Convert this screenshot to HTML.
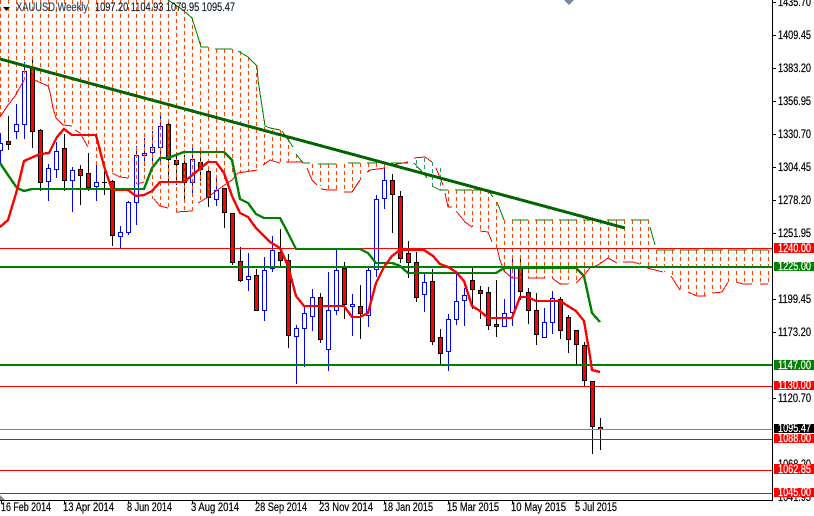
<!DOCTYPE html>
<html><head><meta charset="utf-8"><style>
html,body{margin:0;padding:0;background:#fff;width:814px;height:516px;overflow:hidden}
svg{display:block;font-family:"Liberation Sans",sans-serif;font-size:11.5px}
text{stroke:currentColor;stroke-width:.22px;shape-rendering:auto}
.k{color:#000}.w{color:#fff}
.c{fill:none;stroke:#ff4500;stroke-dasharray:4 3;stroke-width:1}
.tg{fill:none;stroke:#008000;stroke-width:1}
.tr{fill:none;stroke:#f00;stroke-width:1}
</style></head><body>
<svg width="814" height="516" viewBox="0 0 814 516" xmlns="http://www.w3.org/2000/svg" shape-rendering="crispEdges">
<rect width="814" height="516" fill="#fff"/>
<!-- wicks and bodies -->
<path fill="none" stroke="#00f" d="M.5 133V163M16.5 104V139M24.5 62V139M48.5 164V201M56.5 142V178M72.5 167V212M96.5 162V201M120.5 226V248M128.5 201V235M136.5 146V225M144.5 138V166M152.5 131V163M160.5 116V165M192.5 145V197M216.5 178V206M248.5 253V291M264.5 257V321M272.5 236V272M296.5 325V384M304.5 306V367M312.5 289V331M328.5 272V371M336.5 250V315M352.5 294V336M368.5 267V327M376.5 195V277M384.5 165V209M424.5 274V312M448.5 314V371M456.5 274V325M464.5 288V326M504.5 299V326M512.5 256V326M544.5 308V338M552.5 291V334"/>
<path fill="#fff" stroke="#00f" d="M-1.5 143.500h4v7h-4zM14.500 124.500h4v7h-4zM22.500 71.500h4v53h-4zM46.500 168.500h4v13h-4zM54.500 151.500h4v18h-4zM70.500 170.500h4v10h-4zM94.500 182.500h4v4h-4zM118.500 232.500h4v4h-4zM126.500 202.500h4v30h-4zM134.500 155.500h4v47h-4zM142.500 153.500h4v2h-4zM150.500 147.500h4v5h-4zM158.500 126.500h4v21h-4zM190.500 159.500h4v23h-4zM214.500 190.500h4v9h-4zM246.500 276.500h4v3h-4zM262.500 270.500h4v40h-4zM270.500 250.500h4v18h-4zM294.500 328.500h4v8h-4zM302.500 313.500h4v15h-4zM310.500 297.500h4v19h-4zM326.500 310.500h4v39h-4zM334.500 270.500h4v40h-4zM350.500 304.500h4v2h-4zM366.500 270.500h4v45h-4zM374.500 199.500h4v70h-4zM382.500 180.500h4v18h-4zM422.500 282.500h4v12h-4zM446.500 319.500h4v32h-4zM454.500 301.500h4v18h-4zM462.500 295.500h4v5h-4zM502.500 313.500h4v13h-4zM510.500 268.500h4v44h-4zM542.500 322.500h4v15h-4zM550.500 298.500h4v24h-4z"/>
<path fill="none" stroke="#000" d="M8.500 116V150M32.500 58V148M40.500 129V191M64.500 134V191M80.500 165V205M88.500 153V191M104.500 170V195M112.500 180V246M168.500 123V183M176.500 155V185M184.500 155V200M200.500 150V181M208.500 170V207M224.500 188V228M232.500 213V265M240.500 247V282M256.500 269V311M280.500 229V266M288.500 254V348M320.500 293V343M344.500 262V319M360.500 285V339M392.500 174V233M400.500 191V263M408.500 241V278M416.500 252V302M432.500 269V345M440.500 329V364M472.500 268V309M480.500 286V319M488.500 287V330M496.500 280V337M520.500 255V300M528.500 288V324M536.500 293V345M560.500 297V339M568.500 315V353M576.500 330V364M584.500 342V386M592.500 381V454M600.500 418V450M102 182.500h5"/>
<path fill="#f00" stroke="#000" d="M6.500 141.500h4v3h-4zM30.500 68.500h4v63h-4zM38.500 130.500h4v52h-4zM62.500 148.500h4v32h-4zM78.500 169.500h4v6h-4zM86.500 173.500h4v14h-4zM110.500 181.500h4v54h-4zM166.500 124.500h4v35h-4zM174.500 160.500h4v4h-4zM182.500 163.500h4v19h-4zM198.500 162.500h4v7h-4zM206.500 171.500h4v26h-4zM222.500 188.500h4v24h-4zM230.500 213.500h4v49h-4zM238.500 261.500h4v19h-4zM254.500 275.500h4v35h-4zM278.500 252.500h4v8h-4zM286.500 260.500h4v75h-4zM318.500 297.500h4v42h-4zM342.500 268.500h4v36h-4zM358.500 306.500h4v7h-4zM390.500 180.500h4v14h-4zM398.500 196.500h4v62h-4zM406.500 253.500h4v9h-4zM414.500 262.500h4v35h-4zM430.500 281.500h4v60h-4zM438.500 337.500h4v16h-4zM470.500 280.500h4v9h-4zM478.500 290.500h4v3h-4zM486.500 292.500h4v33h-4zM494.500 324.500h4v2h-4zM518.500 268.500h4v23h-4zM526.500 292.500h4v18h-4zM534.500 310.500h4v24h-4zM558.500 299.500h4v31h-4zM566.500 317.500h4v22h-4zM574.500 330.500h4v14h-4zM582.500 345.500h4v35h-4zM590.500 381.500h4v45h-4zM598.500 427.500h4v2h-4z"/>
<!-- cloud columns -->
<path class="c" d="M.5 0V117M8.500 0V105M16.500 0V98M24.500 0V80M32.500 0V78M40.500 0V82M48.500 0V86M56.500 0V116M64.500 0V125M72.500 0V126M80.500 0V132M88.500 0V147M96.500 0V168M104.500 0V172M112.500 0V173M120.500 0V177M128.500 0V178M136.500 0V184M144.500 0V182M152.500 0V199M160.500 0V206M168.500 0V208M176.500 5V212M184.500 10V212M192.500 18V211M200.500 42V203M208.500 47V197M216.500 49V191M224.500 49V182M232.500 49V175M240.500 51V172M248.500 57V171M256.500 66V170M264.500 120V165M272.500 130V160M280.500 130V163M288.500 138V162M296.500 154V162M312.500 164V175M320.500 164V186M328.500 164V189M336.500 164V190M344.500 164V192M352.500 163V192M360.500 163V180M368.500 163V172M376.500 163V170M384.500 164V168M448.500 190V207M456.500 190V212M464.500 190V218M472.500 190V227M480.500 190V231M488.500 190V232M496.500 202V248M504.500 220V271M512.500 220V278M520.500 220V278M528.500 220V278M536.500 220V278M544.500 220V278M552.500 220V278M560.500 220V284M568.500 220V284M576.500 220V283M584.500 220V274M592.500 220V268M600.500 220V263M608.500 220V258M616.500 220V262M624.500 220V262M632.500 220V262M640.500 220V264M648.500 220V267M656.500 250V270M664.500 250V272M672.500 250V276M680.500 250V290M688.500 250V292M696.500 250V295M704.500 250V296M712.500 250V293M720.500 250V292M728.500 250V282M736.500 250V282M744.500 250V284M752.500 250V284M760.500 250V284M768.500 250V284"/>
<path class="c" style="stroke:#1a9a6a" d="M416.500 160V168M424.500 158V173M432.500 162V186M440.500 168V190"/>
<!-- cloud edges -->
<path class="tg" d="M168 0L183 10L192 18L198 37L201 47H208M215 49H232M238 51L248 57L257 66L258 80L265 126L270 128L280 130M282 131L293 147M296 154L303 163H310M318 164H336M348 163H360M367 163H377M391 163H408M414 163L425 175L427 178M432 186L440 190H448M455 190H472M473 190H488L493 197M497 202L504 220M512 220H528M535 220H553M559 220H577M583 220H601M607 220H625M631 220H649M650 227L655 245M657 250H675M680 250H699M704 250H723M728 250H747M752 250H768"/>
<path class="tr" d="M0 117L8 105L15 96L24 80M30 78L48 86L50 92L53 108L56 118L63 125L72 126M75 130L80 133L88 147M112 173L120 177L128 178M137 184L144 182M154 199L160 206L168 208M176 212L192 211M198 203L208 197L216 191L232 180L238 173L257 170M263 165L270 160L280 163M286 162H303M307 168L312 180L317 185M321 189L328 190H337M344 192H352L360 180M367 172L370 170L385 168M392 165L408 162M414 158L425 157L432 162M436 168L443 185M445 193L448 207L452 207M457 212L465 222L472 227M480 231L488 232L492 242M497 248L500 260L504 271L512 278H520M528 278H545M552 278L560 284H568M576 283L585 274L590 268L598 265L608 258L617 263M623 262H633L640 264M647 268L663 272M671 276L680 290M688 292L697 296H706M713 293L722 292L728 282M736 282L743 284H752M760 284H768"/>
<!-- horizontal levels -->
<rect x="0" y="248" width="772" height="1" fill="#f00"/>
<rect x="0" y="266" width="772" height="2" fill="#008000"/>
<rect x="0" y="364" width="772" height="2" fill="#008000"/>
<rect x="0" y="386" width="772" height="1" fill="#f00"/>
<rect x="0" y="429" width="772" height="1" fill="#808890"/>
<rect x="0" y="439" width="772" height="1" fill="#f00"/>
<rect x="0" y="470" width="772" height="1" fill="#f00"/>
<rect x="0" y="493" width="772" height="1" fill="#f00"/>
<!-- trendline -->
<path d="M0 59L625 228" fill="none" stroke="#006400" stroke-width="3"/>
<!-- kijun / tenkan -->
<path fill="none" stroke="#008000" stroke-width="2.400" d="M0 163L8 175L17 188L24 191L32 189H144L152 168L160 158L168 158L184 152H224L232 160L240 199L248 203L256 214L264 218H280L288 233L296 249H360L368 253L376 263H392L400 266L408 273H496L504 268H576L584 276L592 313L600 322"/>
<path fill="none" stroke="#f00" stroke-width="2.400" d="M0 227L8 220L17 190L24 161L40 154L49 153L57 137L64 129L72 135H96L104 166L112 190H128L136 196L144 195L152 191L160 182H184L208 162H216L224 173L232 196L240 213L248 217L256 228L270 242L280 248L288 266L296 296L304 306H344L352 317H360L368 313L376 283L384 267L392 256L400 250H424L433 256L440 264L448 267L456 272L464 281L472 306L480 311L488 318H512L520 297H528L536 301H560L568 306L576 311L584 321L590 356L592 370L600 372"/>
<!-- axes -->
<rect x="772" y="0" width="1" height="501" fill="#000"/>
<rect x="0" y="500" width="773" height="1" fill="#000"/>
<path stroke="#000" fill="none" d="M773 2.500h3M773 35.500h3M773 68.500h3M773 101.500h3M773 134.500h3M773 167.500h3M773 200.500h3M773 233.500h3M773 299.500h3M773 332.500h3M773 398.500h3M1.500 500v4M64.500 500v4M128.500 500v4M192.500 500v4M256.500 500v4M320.500 500v4M384.500 500v4M448.500 500v4M512.500 500v4M576.500 500v4"/>
<g fill="#000" class="k">
<text x="778" y="6" textLength="33" lengthAdjust="spacingAndGlyphs">1435.70</text>
<text x="778" y="39" textLength="33" lengthAdjust="spacingAndGlyphs">1409.45</text>
<text x="778" y="72" textLength="33" lengthAdjust="spacingAndGlyphs">1383.20</text>
<text x="778" y="105" textLength="33" lengthAdjust="spacingAndGlyphs">1356.95</text>
<text x="778" y="138" textLength="33" lengthAdjust="spacingAndGlyphs">1330.70</text>
<text x="778" y="171" textLength="33" lengthAdjust="spacingAndGlyphs">1304.45</text>
<text x="778" y="204" textLength="33" lengthAdjust="spacingAndGlyphs">1278.20</text>
<text x="778" y="237" textLength="33" lengthAdjust="spacingAndGlyphs">1251.95</text>
<text x="778" y="303" textLength="33" lengthAdjust="spacingAndGlyphs">1199.45</text>
<text x="778" y="336" textLength="33" lengthAdjust="spacingAndGlyphs">1173.20</text>
<text x="778" y="402" textLength="33" lengthAdjust="spacingAndGlyphs">1120.70</text>
<text x="778" y="468" textLength="33" lengthAdjust="spacingAndGlyphs">1068.20</text>
<text x="778" y="501" textLength="33" lengthAdjust="spacingAndGlyphs">1041.95</text>
</g>
<!-- price boxes -->
<rect x="774" y="243" width="40" height="10" fill="#f00"/>
<rect x="774" y="262" width="40" height="9" fill="#008000"/>
<rect x="774" y="360" width="40" height="10" fill="#008000"/>
<rect x="774" y="381" width="40" height="9" fill="#f00"/>
<rect x="774" y="424" width="40" height="9" fill="#000"/>
<rect x="774" y="434" width="40" height="9" fill="#f00"/>
<rect x="774" y="464" width="40" height="10" fill="#f00"/>
<rect x="774" y="488" width="40" height="9" fill="#f00"/>
<g fill="#fff" class="w">
<text x="778" y="252" textLength="33" lengthAdjust="spacingAndGlyphs">1240.00</text>
<text x="778" y="270" textLength="33" lengthAdjust="spacingAndGlyphs">1225.00</text>
<text x="778" y="369" textLength="33" lengthAdjust="spacingAndGlyphs">1147.00</text>
<text x="778" y="389" textLength="33" lengthAdjust="spacingAndGlyphs">1130.00</text>
<text x="778" y="432" textLength="33" lengthAdjust="spacingAndGlyphs">1095.47</text>
<text x="778" y="442" textLength="33" lengthAdjust="spacingAndGlyphs">1088.00</text>
<text x="778" y="473" textLength="33" lengthAdjust="spacingAndGlyphs">1062.85</text>
<text x="778" y="496" textLength="33" lengthAdjust="spacingAndGlyphs">1045.00</text>
</g>
<!-- dates -->
<g fill="#000" class="k">
<text x="1" y="511" textLength="50" lengthAdjust="spacingAndGlyphs">16 Feb 2014</text>
<text x="63" y="511" textLength="51" lengthAdjust="spacingAndGlyphs">13 Apr 2014</text>
<text x="127" y="511" textLength="45" lengthAdjust="spacingAndGlyphs">8 Jun 2014</text>
<text x="191" y="511" textLength="48" lengthAdjust="spacingAndGlyphs">3 Aug 2014</text>
<text x="255" y="511" textLength="52" lengthAdjust="spacingAndGlyphs">28 Sep 2014</text>
<text x="319" y="511" textLength="54" lengthAdjust="spacingAndGlyphs">23 Nov 2014</text>
<text x="383" y="511" textLength="50" lengthAdjust="spacingAndGlyphs">18 Jan 2015</text>
<text x="447" y="511" textLength="52" lengthAdjust="spacingAndGlyphs">15 Mar 2015</text>
<text x="511" y="511" textLength="55" lengthAdjust="spacingAndGlyphs">10 May 2015</text>
<text x="575" y="511" textLength="42" lengthAdjust="spacingAndGlyphs">5 Jul 2015</text>
</g>
<!-- header -->
<path d="M3 7h7l-3.500 4z" fill="#000" style="shape-rendering:auto"/>
<text x="16" y="11" textLength="72" lengthAdjust="spacingAndGlyphs" fill="#33475a" style="color:#33475a">XAUUSD,Weekly</text>
<text x="95" y="11" textLength="140" lengthAdjust="spacingAndGlyphs" fill="#1a2530" style="color:#1a2530">1097.20 1104.93 1079.95 1095.47</text>
<!-- shift markers -->
<path d="M564 0h10l-5 5z" fill="#778899" style="shape-rendering:auto"/>
<path d="M0 495L5 500H0z" fill="#778899" style="shape-rendering:auto"/>
</svg>
</body></html>
